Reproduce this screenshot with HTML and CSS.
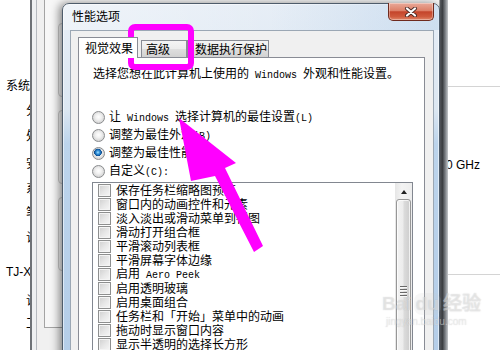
FILE: index.html
```html
<!DOCTYPE html>
<html lang="zh-CN">
<head>
<meta charset="utf-8">
<title>性能选项</title>
<link rel="stylesheet" href="styles.css">
</head>
<body>
<div class="screen">
  <div class="main">
    <div class="labels">
      <div class="lbl">系统</div>
      <div class="lbl sub">分</div>
      <div class="lbl sub">处</div>
      <div class="lbl sub">安</div>
      <div class="lbl sub">系</div>
      <div class="lbl sub">笔</div>
      <div class="lbl sub">计</div>
      <div class="lbl lat-lbl">TJ-X</div>
      <div class="lbl sub">计</div>
      <div class="lbl sub">工</div>
    </div>
    <div class="info">
      <div class="rule"></div>
      <div class="ghz">0 GHz</div>
      <div class="rule rule2"></div>
    </div>
  </div>

  <div class="back-win">
    <div class="bw-frame">
      <div class="bw-panel">
        <div class="bw-btn"></div>
        <div class="bw-btn"></div>
        <div class="bw-btn"></div>
      </div>
    </div>
    <div class="bw-edge"></div>
  </div>

  <div class="dialog">
    <div class="titlebar">
      <span class="title">性能选项</span>
      <div class="close">
        <svg width="14" height="10" viewBox="0 0 14 10">
          <path d="M3 1.5 L11 8.5 M11 1.5 L3 8.5" stroke="#4a2a26" stroke-width="4" stroke-linecap="round"/>
          <path d="M3 1.5 L11 8.5 M11 1.5 L3 8.5" stroke="#ffffff" stroke-width="2.2" stroke-linecap="round"/>
        </svg>
      </div>
    </div>
    <div class="client">
      <div class="tabs">
        <div class="tab sel">视觉效果</div>
        <div class="tab t2">高级</div>
        <div class="tab t3">数据执行保护</div>
      </div>
      <div class="page">
        <p class="intro">选择您想在此计算机上使用的<span class="lat"> Windows </span>外观和性能设置。</p>
        <div class="radios">
          <div class="radio"><span class="rb"></span><span class="rt">让<span class="lat"> Windows </span>选择计算机的最佳设置<span class="lat">(L)</span></span></div>
          <div class="radio"><span class="rb"></span><span class="rt">调整为最佳外观<span class="lat">(B)</span></span></div>
          <div class="radio"><span class="rb on"></span><span class="rt">调整为最佳性能<span class="lat">(P)</span></span></div>
          <div class="radio"><span class="rb"></span><span class="rt">自定义<span class="lat">(C):</span></span></div>
        </div>
        <div class="listbox">
          <div class="items">
            <div class="item"><span class="cb"></span><span class="it">保存任务栏缩略图预览</span></div>
            <div class="item"><span class="cb"></span><span class="it">窗口内的动画控件和元素</span></div>
            <div class="item"><span class="cb"></span><span class="it">淡入淡出或滑动菜单到视图</span></div>
            <div class="item"><span class="cb"></span><span class="it">滑动打开组合框</span></div>
            <div class="item"><span class="cb"></span><span class="it">平滑滚动列表框</span></div>
            <div class="item"><span class="cb"></span><span class="it">平滑屏幕字体边缘</span></div>
            <div class="item"><span class="cb"></span><span class="it">启用<span class="lat"> Aero Peek</span></span></div>
            <div class="item"><span class="cb"></span><span class="it">启用透明玻璃</span></div>
            <div class="item"><span class="cb"></span><span class="it">启用桌面组合</span></div>
            <div class="item"><span class="cb"></span><span class="it">任务栏和「开始」菜单中的动画</span></div>
            <div class="item"><span class="cb"></span><span class="it">拖动时显示窗口内容</span></div>
            <div class="item"><span class="cb"></span><span class="it">显示半透明的选择长方形</span></div>
          </div>
          <div class="vscroll">
            <div class="up"><span class="tri"></span></div>
            <div class="thumb">
              <div class="grip"><span></span><span></span><span></span><span></span></div>
            </div>
          </div>
        </div>
      </div>
    </div>
  </div>

  <div class="highlight"></div>

  <svg class="arrow" width="500" height="350" viewBox="0 0 500 350">
    <polygon points="179,118 236,163 225,168 263,246 254,252 215,176 191,181" fill="#ff00ff"/>
  </svg>

  <div class="watermark">
    <div class="wm1">Bai<span class="du">du</span>经验</div>
    <div class="wm2">jingyan.baidu.com</div>
  </div>
</div>
</body>
</html>
```

FILE: styles.css
```css
html, body {
  margin: 0;
  padding: 0;
}
body {
  width: 500px;
  height: 350px;
  overflow: hidden;
  background: #ffffff;
  font-family: "Noto Sans CJK SC", "Noto Sans", sans-serif;
  font-size: 12px;
  color: #000;
}
.screen {
  position: relative;
  width: 500px;
  height: 350px;
  overflow: hidden;
}

/* main window behind everything */
.main {
  display: flex;
  height: 350px;
}
.labels {
  width: 30px;
  flex: none;
}
.lbl {
  height: 16px;
  line-height: 16px;
  white-space: nowrap;
  padding-left: 6px;
}
.lbl.sub { padding-left: 26px; }
.lat-lbl { font-family: "Liberation Sans", sans-serif; font-size: 12px; }
.lbl:nth-child(1) { margin-top: 77px; }
.lbl:nth-child(2) { margin-top: 9px; }
.lbl:nth-child(3) { margin-top: 9px; }
.lbl:nth-child(4) { margin-top: 12px; }
.lbl:nth-child(5) { margin-top: 9px; }
.lbl:nth-child(6) { margin-top: 8px; }
.lbl:nth-child(7) { margin-top: 9px; }
.lbl:nth-child(8) { margin-top: 19px; }
.lbl:nth-child(9) { margin-top: 12px; }
.lbl:nth-child(10) { margin-top: 7px; }

.info {
  margin-left: auto;
  width: 54px;
  flex: none;
}
.rule {
  height: 1px;
  background: #d4d4d4;
  margin-top: 86px;
}
.ghz {
  margin-top: 70px;
  height: 16px;
  line-height: 16px;
  font-family: "Liberation Sans", sans-serif;
  font-size: 12px;
  white-space: nowrap;
}
.rule2 { margin-top: 101px; }

/* system properties window behind the dialog */
.back-win {
  position: absolute;
  left: 30px;
  top: 0;
  width: 418px;
  height: 350px;
  box-sizing: border-box;
  border-left: 2px solid #6e7277;
  background: #eef0f2;
  display: flex;
}
.bw-frame {
  flex: 1;
  margin-left: 4px;
  border-left: 1px solid #b6bac0;
  background: #f0f0f0;
  display: flex;
}
.bw-panel {
  flex: 1;
  margin-left: 7px;
  margin-top: -5px;
  height: 331px;
  border: 1px solid #a4a4a4;
  background: #f7f7f7;
  padding-left: 13px;
  display: flex;
  flex-direction: column;
}
.bw-btn {
  width: 30px;
  height: 72px;
  border: 1px solid #c9c9c9;
  border-radius: 4px;
  background: #f2f2f2;
}
.bw-btn:nth-child(1) { margin-top: 27px; }
.bw-btn:nth-child(2) { margin-top: 13px; }
.bw-btn:nth-child(3) { margin-top: 13px; }
.bw-edge {
  width: 8px;
  flex: none;
  background: linear-gradient(to right, #5b5f64 0, #3d4044 30%, #7c8085 65%, #c4c7ca 100%);
}

/* performance options dialog */
.dialog {
  position: absolute;
  left: 62px;
  top: 3px;
  width: 378px;
  height: 360px;
  box-sizing: border-box;
  border: 1px solid #4e5c6b;
  border-radius: 7px 7px 0 0;
  background: linear-gradient(to bottom, #e7eef6 0, #dce7f2 105px, #bcd4ec 140px, #b4cde8 100%);
  box-shadow: -3px 0 9px rgba(0, 0, 0, 0.45), inset 0 0 0 1px rgba(255, 255, 255, 0.55);
  padding: 0 5px 0 7px;
  display: flex;
  flex-direction: column;
}
.titlebar {
  position: relative;
  height: 26px;
  flex: none;
  margin: 0 -5px 0 -7px;
  padding-left: 9px;
  border-radius: 6px 6px 0 0;
  background: linear-gradient(to right, rgba(255, 255, 255, 0.35) 0, rgba(255, 255, 255, 0) 55%, rgba(160, 195, 230, 0.35) 100%);
}
.title {
  display: block;
  line-height: 23px;
  font-size: 12px;
  color: #000;
}
.close {
  position: absolute;
  right: 5px;
  top: -1px;
  width: 46px;
  height: 18px;
  box-sizing: border-box;
  border: 1px solid #6e2a1e;
  border-top: none;
  border-radius: 0 0 5px 5px;
  background: linear-gradient(to bottom, #e9a999 0, #dd8068 45%, #c4442b 52%, #cf5a3d 80%, #e0876b 100%);
  box-shadow: inset 0 0 0 1px rgba(255, 255, 255, 0.35);
  display: flex;
  align-items: center;
  justify-content: center;
}

.client {
  flex: 1;
  border: 1px solid #9ba7b4;
  background: #f0f0f0;
  padding: 6px 8px 0 7px;
  display: flex;
  flex-direction: column;
}
.tabs {
  display: flex;
  align-items: flex-end;
  height: 20px;
  flex: none;
}
.tab {
  box-sizing: border-box;
  border: 1px solid #898c95;
  border-bottom: none;
  white-space: nowrap;
  font-size: 12px;
}
.tab.sel {
  position: relative;
  z-index: 1;
  width: 60px;
  height: 21px;
  margin-bottom: -1px;
  line-height: 20px;
  padding-left: 6px;
  background: #ffffff;
}
.tab.t2,
.tab.t3 {
  height: 17px;
  line-height: 16px;
  background: linear-gradient(to bottom, #f4f4f4 0, #ececec 48%, #dedede 52%, #d2d2d2 100%);
}
.tab.t2 {
  width: 46px;
  margin-left: 3px;
  padding-left: 4px;
}
.tab.t3 {
  width: 82px;
  padding-left: 7px;
}

.page {
  flex: 1;
  border: 1px solid #898c95;
  background: #ffffff;
  padding: 8px 11px 0 13px;
}
.intro {
  margin: 0 0 0 1px;
  line-height: 14px;
  white-space: nowrap;
}
.lat {
  font-family: "Liberation Mono", "DejaVu Sans Mono", monospace;
  font-size: 10px;
  white-space: pre;
}
.radios {
  margin-top: 25px;
}
.radio {
  height: 18px;
  display: flex;
  align-items: center;
  white-space: nowrap;
}
.rb {
  width: 13px;
  height: 13px;
  box-sizing: border-box;
  border-radius: 50%;
  border: 1px solid #8a8c8e;
  background: radial-gradient(circle at 50% 45%, #ffffff 0, #f1f1f1 35%, #d4d4d4 75%, #e8e8e8 100%);
  flex: none;
}
.rb.on {
  background:
    radial-gradient(circle at 45% 40%, #a9e4ff 0, #3b9ae0 1.6px, #0f5aa3 3.2px, #0c4a8a 3.6px, rgba(0, 0, 0, 0) 4px),
    radial-gradient(circle at 50% 45%, #ffffff 0, #f1f1f1 35%, #d4d4d4 75%, #e8e8e8 100%);
}
.rt {
  margin-left: 4px;
  line-height: 14px;
}

.listbox {
  margin-top: 2px;
  height: 200px;
  border: 1px solid #828790;
  background: #ffffff;
  display: flex;
}
.items {
  flex: 1;
  padding-left: 5px;
  overflow: hidden;
}
.item {
  height: 14px;
  display: flex;
  align-items: center;
  white-space: nowrap;
}
.cb {
  width: 13px;
  height: 13px;
  box-sizing: border-box;
  border: 1px solid #8e8f8f;
  background: linear-gradient(135deg, #cfcfcf 0, #e6e6e6 50%, #f7f7f7 100%);
  box-shadow: inset 0 0 0 1px #f4f4f4;
  flex: none;
}
.it {
  margin-left: 5px;
  line-height: 14px;
}
.vscroll {
  width: 17px;
  flex: none;
  background: linear-gradient(to right, #e6e6e6 0, #f3f3f3 40%, #ededed 100%);
  display: flex;
  flex-direction: column;
}
.up {
  height: 18px;
  display: flex;
  align-items: center;
  justify-content: center;
}
.tri {
  width: 0;
  height: 0;
  border-left: 3.5px solid transparent;
  border-right: 3.5px solid transparent;
  border-bottom: 4px solid #202020;
  margin-top: 2px;
}
.thumb {
  margin: 1px 1px 0 1px;
  height: 218px;
  box-sizing: border-box;
  border: 1px solid #979797;
  border-radius: 3px;
  background: linear-gradient(to right, #f3f3f3 0, #ececec 45%, #dbdbdb 55%, #cdcdcd 100%);
  box-shadow: inset 0 0 0 1px rgba(255, 255, 255, 0.7);
  display: flex;
  align-items: center;
  justify-content: center;
}
.grip {
  display: flex;
  flex-direction: column;
  gap: 1px;
}
.grip span {
  display: block;
  width: 7px;
  height: 1px;
  background: #6a6a6a;
  border-bottom: 1px solid #f8f8f8;
}

/* annotations */
.highlight {
  position: absolute;
  left: 128px;
  top: 24px;
  width: 66px;
  height: 46px;
  box-sizing: border-box;
  border: 6px solid #ff00ff;
  border-radius: 7px;
}
.arrow {
  position: absolute;
  left: 0;
  top: 0;
  pointer-events: none;
}
.watermark {
  position: absolute;
  left: 382px;
  top: 293px;
  color: rgba(255, 255, 255, 0.4);
  text-shadow: 0 0 1px rgba(140, 140, 140, 0.4);
  font-family: "Liberation Sans", sans-serif;
  white-space: nowrap;
}
.wm1 {
  font-size: 19px;
  font-weight: bold;
  line-height: 22px;
}
.wm1 .du {
  display: inline-block;
  margin: 0 2px;
  padding: 0 2px;
  border-radius: 8px;
  background: rgba(200, 200, 200, 0.15);
}
.wm2 {
  font-size: 10px;
  line-height: 14px;
  padding-left: 4px;
}
```
